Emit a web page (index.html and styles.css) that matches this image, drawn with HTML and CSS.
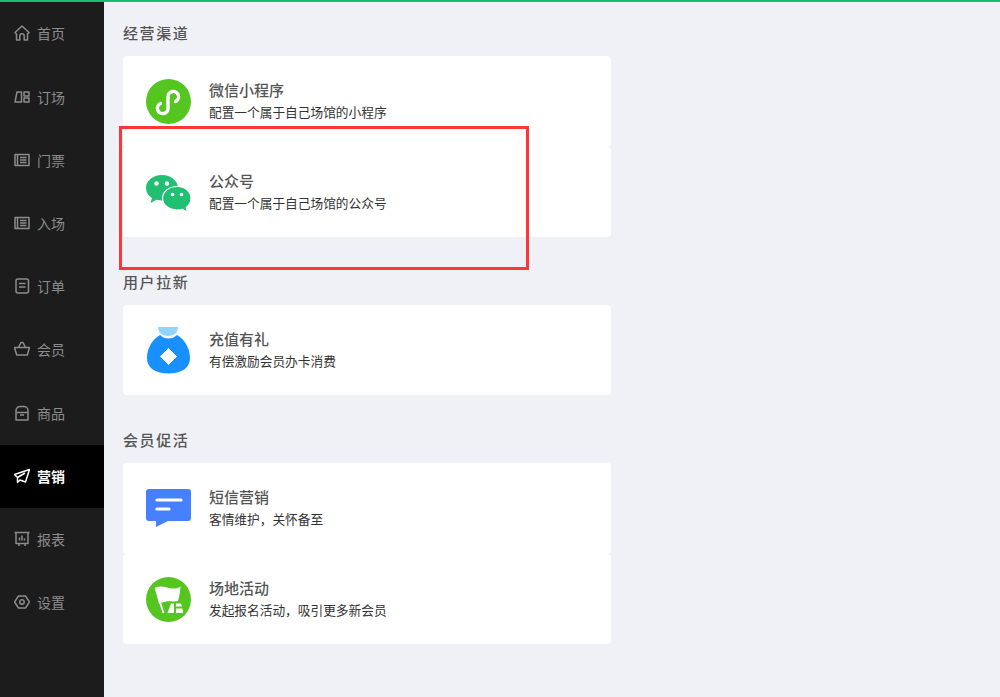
FILE: index.html
```html
<!DOCTYPE html>
<html lang="zh-CN">
<head>
  <meta charset="UTF-8">
  <title>营销</title>
  <link rel="stylesheet" href="styles.css">
</head>
<body>

<div class="layout">
  <nav class="sidebar">
    <a class="nav-item">
      <svg class="nav-icon" viewBox="0 0 16 16"><path d="M1 7.500 8 1l7 6.500-1.500 1.600V15h-3.300v-4a2.200 2.200 0 0 0-4.400 0v4H2.500V9.100z"/></svg>
      <span>首页</span>
    </a>
    <a class="nav-item">
      <svg class="nav-icon" viewBox="0 0 16 16"><path d="M3 3h4.500v10H1zM10 3h5v4h-5zM10 9h5v4h-5z"/></svg>
      <span>订场</span>
    </a>
    <a class="nav-item">
      <svg class="nav-icon" viewBox="0 0 16 16"><path d="M1 2.500h14v11H1zM3.500 2.500v11M6 5.500h6.500M6 8h6.500M6 10.500h6.500"/></svg>
      <span>门票</span>
    </a>
    <a class="nav-item">
      <svg class="nav-icon" viewBox="0 0 16 16"><path d="M1 2.500h14v11H1zM3.500 2.500v11M6 5.500h6.500M6 8h6.500M6 10.500h6.500"/></svg>
      <span>入场</span>
    </a>
    <a class="nav-item">
      <svg class="nav-icon" viewBox="0 0 16 16"><rect x="2" y="1" width="12.500" height="14" rx="2"/><path d="M5 5.500h6.500M5 9h6.500"/></svg>
      <span>订单</span>
    </a>
    <a class="nav-item">
      <svg class="nav-icon" viewBox="0 0 16 16"><path d="M.5 6.500h15L13.300 14H2.700zM4.500 6.500 7 1.500h2l2.500 5"/></svg>
      <span>会员</span>
    </a>
    <a class="nav-item">
      <svg class="nav-icon" viewBox="0 0 16 16"><path d="M2 5.500a4 4 0 0 1 4-4h4a4 4 0 0 1 4 4V15H2zM2 7.500h12M6 10h4"/></svg>
      <span>商品</span>
    </a>
    <a class="nav-item active">
      <svg class="nav-icon" viewBox="0 0 16 16"><path d="M.5 6.500 15.500 1.500 11.500 14 6 12 3.500 14.500V9.500zM3.500 9.500 11 5"/></svg>
      <span>营销</span>
    </a>
    <a class="nav-item">
      <svg class="nav-icon" viewBox="0 0 16 16"><path d="M.5 1.500h15M2 1.500v11h12v-11M5 12.500V15M11 12.500V15M5.500 9.500V6.500M8 9.500V4.500M10.500 9.500V7.500"/></svg>
      <span>报表</span>
    </a>
    <a class="nav-item">
      <svg class="nav-icon" viewBox="0 0 16 16"><path d="M4.500 2h7L15.500 8l-4 6h-7L.5 8z"/><circle cx="8" cy="8" r="2.200"/></svg>
      <span>设置</span>
    </a>
  </nav>

  <main class="content">
    <section class="group">
      <h2 class="group-title">经营渠道</h2>
      <div class="card">
        <svg class="card-icon" viewBox="0 0 45 45">
          <circle cx="22.500" cy="22.500" r="22.500" fill="#55c51f"/>
          <path d="M14.500 24.500A5.300 5.300 0 1 0 22 29V18a5.300 5.300 0 1 1 7.500 4.500" fill="none" stroke="#fff" stroke-width="3.400" stroke-linecap="round"/>
        </svg>
        <div class="card-text">
          <h3>微信小程序</h3>
          <p>配置一个属于自己场馆的小程序</p>
        </div>
      </div>
      <div class="card">
        <svg class="card-icon" viewBox="0 0 45 45">
          <path d="M16 5C7 5 0 10.800 0 18c0 4.200 2.300 7.700 6 10l-1.500 5 6-3.200c1.800.5 3.600.8 5.500.8C25 30.600 32 24.800 32 18S25 5 16 5z" fill="#20bf72"/>
          <path d="M31 16.500c-8 0-14.500 5.200-14.500 11.700S23 40 31 40c1.700 0 3.400-.3 5-.8l5.500 3-1.300-4.700c3-2.200 4.800-5.400 4.800-9.300 0-6.500-6-11.700-14-11.700z" fill="#20bf72" stroke="#fff" stroke-width="1.200"/>
          <circle cx="10.500" cy="13.500" r="2.200" fill="#fff"/>
          <circle cx="21" cy="13.500" r="2.200" fill="#fff"/>
          <circle cx="26.500" cy="24.500" r="1.800" fill="#fff"/>
          <circle cx="35.500" cy="24.500" r="1.800" fill="#fff"/>
        </svg>
        <div class="card-text">
          <h3>公众号</h3>
          <p>配置一个属于自己场馆的公众号</p>
        </div>
      </div>
    </section>

    <section class="group">
      <h2 class="group-title">用户拉新</h2>
      <div class="card">
        <svg class="card-icon card-icon-tall" viewBox="0 0 45 47">
          <path d="M12 0h20c0 5-4 9-10 9S12 5 12 0z" fill="#91d5ff"/>
          <path d="M14 8c2.500 2.500 5 3.500 8.500 3.500S28.500 10.500 31 8c7 4 13 12.500 13 23 0 10.500-9 15.500-21.500 15.500S1 41.500 1 31C1 20.500 7 12 14 8z" fill="#1890ff"/>
          <path d="M22.500 21.500 30.500 29.500 22.500 37.500 14.500 29.500z" fill="#fff" stroke="#fff" stroke-width="1" stroke-linejoin="round"/>
        </svg>
        <div class="card-text">
          <h3>充值有礼</h3>
          <p>有偿激励会员办卡消费</p>
        </div>
      </div>
    </section>

    <section class="group">
      <h2 class="group-title">会员促活</h2>
      <div class="card">
        <svg class="card-icon" viewBox="0 0 45 45">
          <path d="M3 3h39a3 3 0 0 1 3 3v26a3 3 0 0 1-3 3H22l-12 6v-6H3a3 3 0 0 1-3-3V6a3 3 0 0 1 3-3z" fill="#4680ff"/>
          <path d="M11 14h24M11 23h12" stroke="#fff" stroke-width="3.200" stroke-linecap="round"/>
        </svg>
        <div class="card-text">
          <h3>短信营销</h3>
          <p>客情维护，关怀备至</p>
        </div>
      </div>
      <div class="card">
        <svg class="card-icon" viewBox="0 0 45 45">
          <circle cx="22.500" cy="22.500" r="22.500" fill="#55c51f"/>
          <path d="M9 10.500c5-2 10-1 14 .5 4 1 8 1 11.500-1.500-.5 5-1 10-2.500 14.500-4 1-8 0-12 .5-3 .5-5 1-7 2.500z" fill="#fff"/>
          <path d="M9.500 11l8 25" stroke="#fff" stroke-width="1.800"/>
          <path d="M25 26.500h3V36h-6.500zM30 26.500h5l1 3h-6zM30 31.500h6.500l.5 4.500h-7z" fill="#fff"/>
        </svg>
        <div class="card-text">
          <h3>场地活动</h3>
          <p>发起报名活动，吸引更多新会员</p>
        </div>
      </div>
    </section>
  </main>
</div>

<!-- highlight box drawn on top of the page -->
<div class="highlight"></div>

</body>
</html>
```

FILE: styles.css
```css
* {
  box-sizing: border-box;
  margin: 0;
  padding: 0;
}

html, body {
  height: 697px;
  overflow: hidden;
}

body {
  position: relative;
  font-family: "Noto Sans CJK SC", "Liberation Sans", sans-serif;
  background: #f0f1f6;
  border-top: 2px solid #1fb877;
}

.layout {
  display: flex;
  height: 695px;
}

.sidebar {
  width: 104px;
  flex-shrink: 0;
  padding-top: 0.6px;
  background: #1c1c1c;
}

.nav-item {
  display: flex;
  align-items: center;
  gap: 7px;
  height: 63.2px;
  padding: 0 0 1.5px 14px;
  font-size: 14px;
  color: #8c8c8c;
}

.nav-item.active {
  background: #000;
  color: #fff;
  font-weight: 700;
}

.nav-icon {
  width: 16px;
  height: 16px;
  fill: none;
  stroke: currentColor;
  stroke-width: 1.5;
  stroke-linejoin: round;
}

.content {
  flex: 1;
  padding: 20px 0 0 19px;
}

.group {
  width: 488px;
  margin-bottom: 34px;
}

.group-title {
  height: 22px;
  margin-bottom: 12px;
  font-size: 15px;
  font-weight: 500;
  line-height: 22px;
  letter-spacing: 1.6px;
  color: #555;
}

.card {
  display: flex;
  align-items: center;
  gap: 18px;
  height: 90px;
  padding-left: 23px;
  background: #fff;
  border-radius: 4px;
}

/* stacked cards touch, so only the rounded corners show between them */
.card:not(:last-child) {
  height: 91px;
  padding-bottom: 1px;
}

.card-icon {
  width: 45px;
  height: 45px;
  flex-shrink: 0;
}

.card-icon-tall {
  height: 47px;
}

.card-text h3 {
  font-size: 15px;
  font-weight: 500;
  line-height: 22px;
  color: #555;
}

.card-text p {
  font-size: 12.7px;
  line-height: 22px;
  color: #333;
}

.highlight {
  position: absolute;
  left: 119px;
  top: 124px;
  width: 410px;
  height: 144px;
  border: 3px solid #ff3636;
}
```
